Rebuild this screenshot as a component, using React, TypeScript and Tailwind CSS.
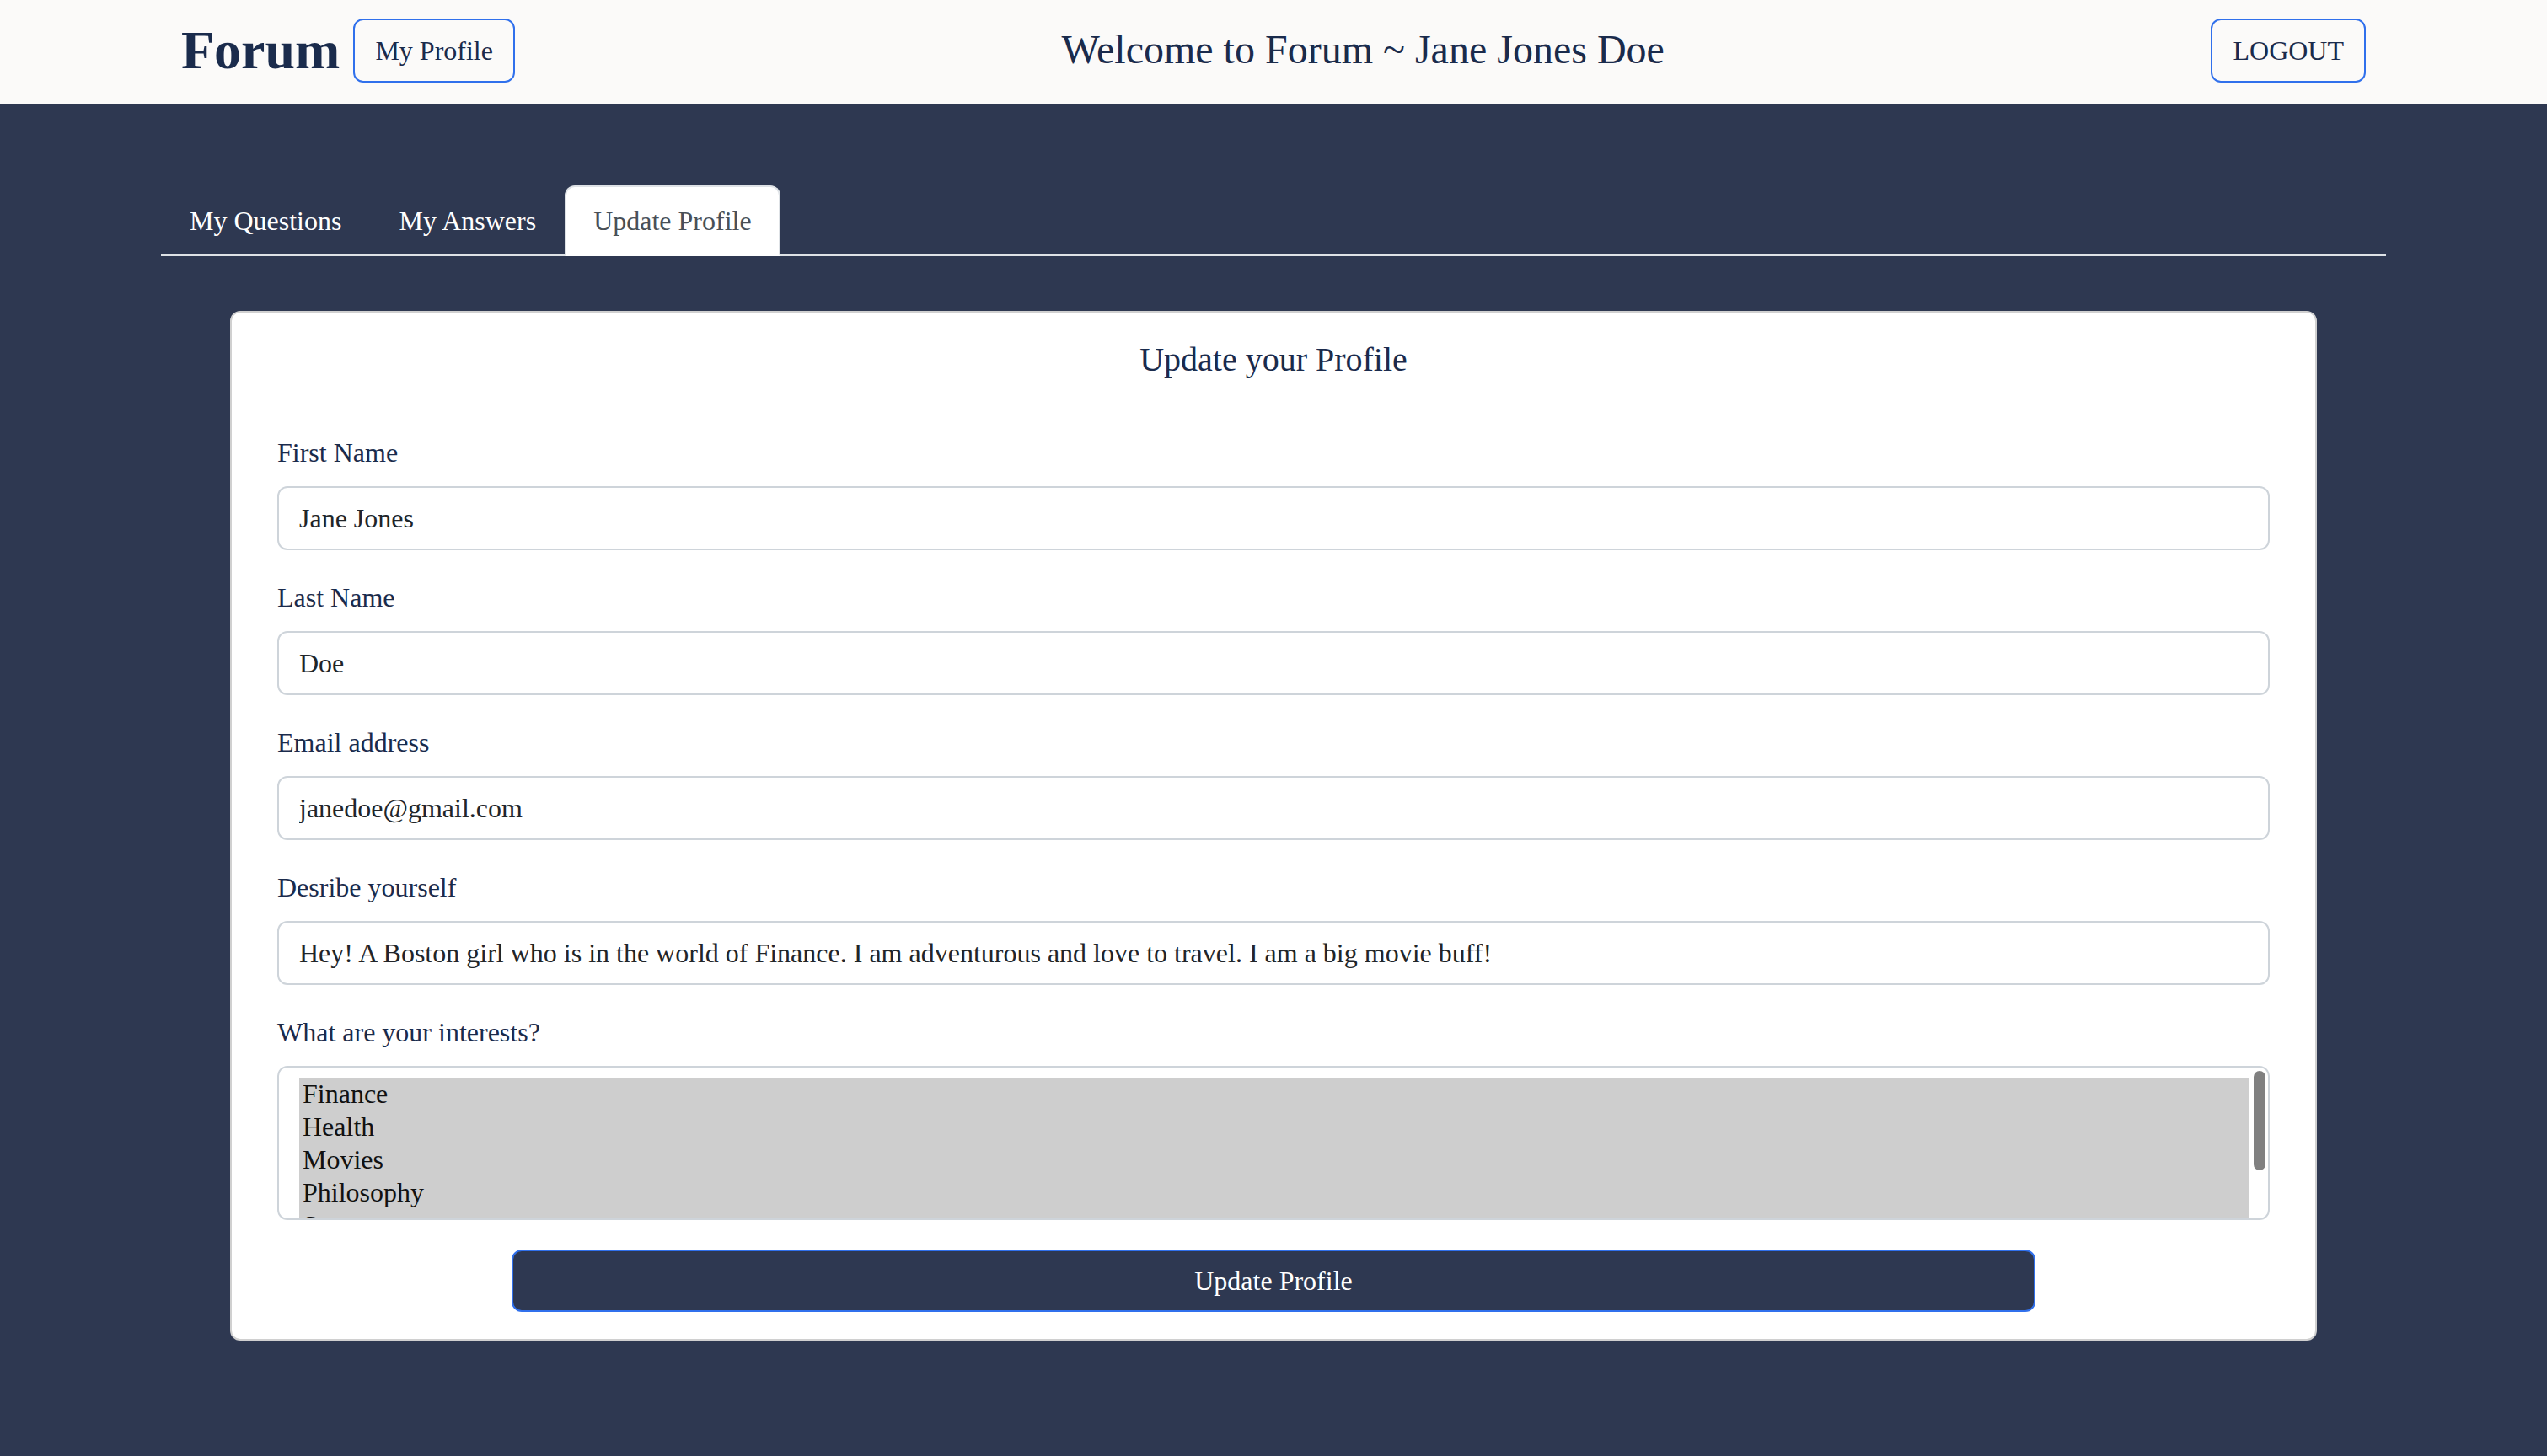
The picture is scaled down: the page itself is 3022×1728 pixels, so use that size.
import * as React from "react";

const interests = ["Finance", "Health", "Movies", "Philosophy", "Sports", "Technology", "Travel"];

const fields = [
  { label: "First Name", value: "Jane Jones" },
  { label: "Last Name", value: "Doe" },
  { label: "Email address", value: "janedoe@gmail.com" },
  {
    label: "Desribe yourself",
    value:
      "Hey! A Boston girl who is in the world of Finance. I am adventurous and love to travel. I am a big movie buff!",
  },
];

function Header() {
  return (
    <header className="h-[124px] bg-[#fbfaf9]">
      <div className="mx-auto flex h-full w-[2592px] items-center justify-between pb-[5px]">
        <div className="flex items-center gap-[16px]">
          <span className="text-[64px] font-bold leading-[76px] text-[#1a2b4c]">Forum</span>
          <button className="rounded-[12px] border-2 border-[#3070ec] px-[24px] py-[12px] text-[32px] leading-[48px] text-[#1a2b4c]">
            My Profile
          </button>
        </div>
        <h1 className="-mt-[2px] text-[48px] leading-[58px] text-[#1a2b4c]">
          Welcome to Forum ~ Jane Jones Doe
        </h1>
        <button className="rounded-[12px] border-2 border-[#3070ec] px-[24px] py-[12px] text-[32px] leading-[48px] text-[#1a2b4c]">
          LOGOUT
        </button>
      </div>
    </header>
  );
}

function Tabs() {
  const tabs = ["My Questions", "My Answers", "Update Profile"];
  return (
    <ul className="flex border-b-2 border-[#dee2e6]">
      {tabs.map((t) => {
        const active = t === "Update Profile";
        return (
          <li key={t} className="-mb-[2px]">
            <button
              className={
                active
                  ? "rounded-t-[12px] border-2 border-[#dee2e6] border-b-white bg-white px-[32px] py-[16px] text-[32px] leading-[48px] text-[#495057]"
                  : "rounded-t-[12px] border-2 border-transparent px-[32px] py-[16px] text-[32px] leading-[48px] text-white"
              }
            >
              {t}
            </button>
          </li>
        );
      })}
    </ul>
  );
}

function Field({ label, value }: { label: string; value: string }) {
  return (
    <div className="mb-[32px]">
      <label className="mb-[16px] block text-[32px] leading-[48px] text-[#1a2b4c]">{label}</label>
      <input
        readOnly
        value={value}
        className="h-[76px] w-full rounded-[12px] border-2 border-[#ced4da] bg-white px-[24px] text-[32px] text-[#212529] outline-none"
      />
    </div>
  );
}

function InterestSelect() {
  return (
    <div className="mb-[35px]">
      <label className="mb-[16px] block text-[32px] leading-[48px] text-[#1a2b4c]">
        What are your interests?
      </label>
      <div className="relative h-[183px] overflow-hidden rounded-[12px] border-2 border-[#ced4da] bg-white pl-[24px] pr-[22px] pt-[12px]">
        <div className="bg-[#cecece]">
          {interests.map((i) => (
            <div key={i} className="pl-[4px] text-[32px] leading-[39px] text-[#111]">
              {i}
            </div>
          ))}
        </div>
        <div className="absolute right-[3px] top-[4px] h-[118px] w-[14px] rounded-full bg-[#808080]" />
      </div>
    </div>
  );
}

export default function App() {
  return (
    <div className="min-h-screen bg-[#2e3851] font-['Liberation_Serif','Times_New_Roman',serif]">
      <Header />
      <main className="mx-auto w-[2640px] pt-[96px]">
        <Tabs />
        <div className="mx-[82px] mt-[65px] rounded-[12px] border-2 border-[#d0d0d0] bg-white px-[54px] py-[32px]">
          <h2 className="mb-[62px] text-center text-[40px] leading-[48px] text-[#1a2b4c]">
            Update your Profile
          </h2>
          {fields.map((f) => (
            <Field key={f.label} label={f.label} value={f.value} />
          ))}
          <InterestSelect />
          <button className="mx-auto block h-[74px] w-[1808px] rounded-[12px] border-2 border-[#3070ec] bg-[#2e3851] text-[32px] text-white">
            Update Profile
          </button>
        </div>
      </main>
    </div>
  );
}
